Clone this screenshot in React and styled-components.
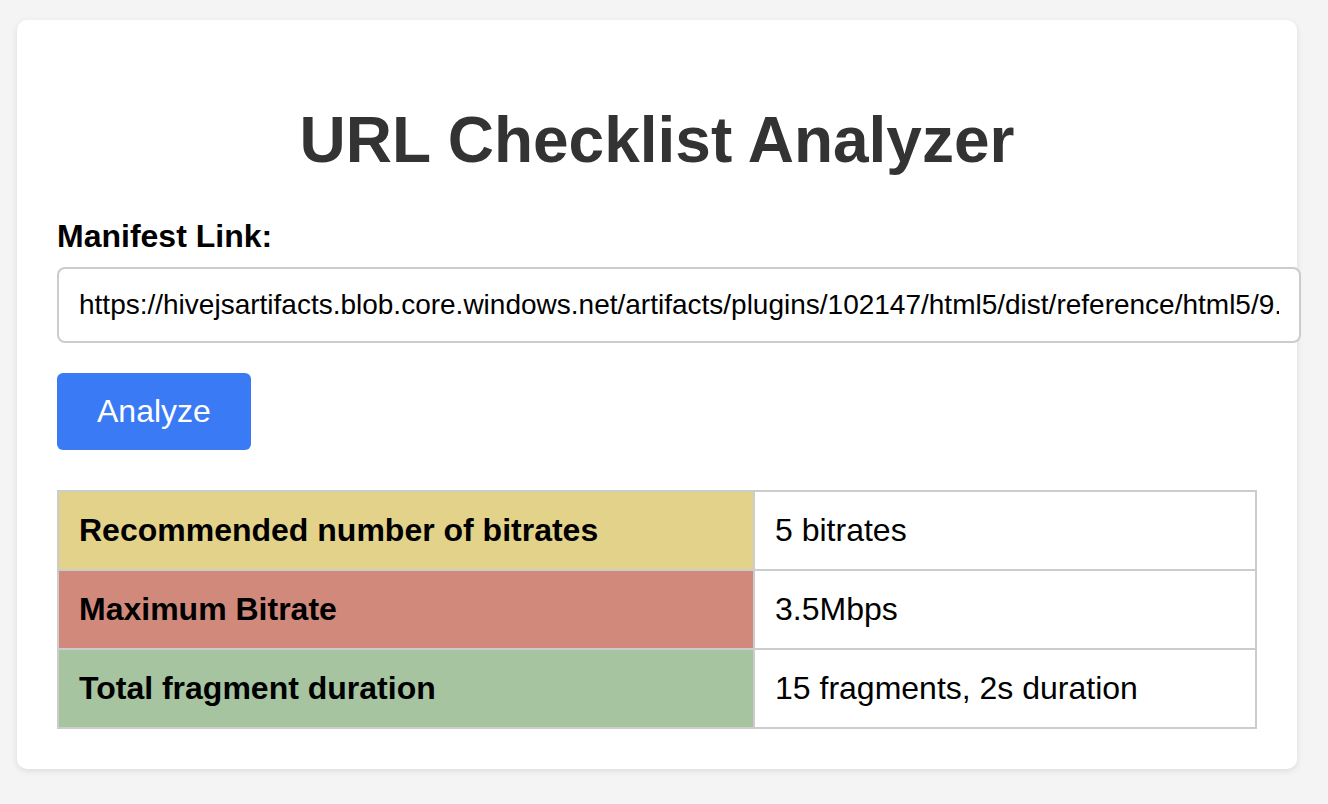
import React, { useState } from "react";
import styled, { createGlobalStyle } from "styled-components";

const GlobalStyle = createGlobalStyle`
  body {
    margin: 0;
    background: #f4f4f4;
    font-family: "Liberation Sans", Arial, Helvetica, sans-serif;
  }
`;

const Card = styled.div`
  width: 1280px;
  margin: 20px 0 35px 17px;
  padding: 40px;
  box-sizing: border-box;
  background: #fff;
  border-radius: 10px;
  box-shadow: 0 2px 6px rgba(0, 0, 0, 0.1);
`;

const Title = styled.h1`
  margin: 43px 0 41px;
  text-align: center;
  font-size: 64px;
  font-weight: bold;
  color: #333;
`;

const Label = styled.label`
  display: block;
  margin-bottom: 12px;
  font-size: 32px;
  font-weight: bold;
  color: #000;
`;

const LinkInput = styled.input`
  display: block;
  width: 100%;
  margin: 0 0 30px;
  padding: 20px 20px;
  border: 2px solid #ccc;
  border-radius: 8px;
  font-family: inherit;
  font-size: 28px;
  line-height: 32px;
  color: #000;
  background: #fff;
  outline: none;
`;

const AnalyzeButton = styled.button`
  display: block;
  padding: 20px 40px;
  border: none;
  border-radius: 6px;
  background: #3a7bf5;
  color: #fff;
  font-family: inherit;
  font-size: 32px;
  line-height: 37px;
  cursor: pointer;
`;

const ResultTable = styled.table`
  width: 1200px;
  margin-top: 40px;
  border-collapse: collapse;
  table-layout: fixed;
  font-size: 32px;
  line-height: 37px;
  color: #000;
`;

const rowColors = {
  warn: "#e3d28a",
  bad: "#d0897b",
  good: "#a6c4a0",
};

const HeadCell = styled.th`
  padding: 20px;
  border: 2px solid #ccc;
  text-align: left;
  font-weight: bold;
  background: ${(p) => rowColors[p.$status]};
`;

const ValueCell = styled.td`
  padding: 20px;
  border: 2px solid #ccc;
  background: #fff;
`;

const results = [
  { name: "Recommended number of bitrates", value: "5 bitrates", status: "warn" },
  { name: "Maximum Bitrate", value: "3.5Mbps", status: "bad" },
  { name: "Total fragment duration", value: "15 fragments, 2s duration", status: "good" },
];

export default function App() {
  const [link, setLink] = useState(
    "https://hivejsartifacts.blob.core.windows.net/artifacts/plugins/102147/html5/dist/reference/html5/9.1.0/manifest.mpd"
  );

  return (
    <>
      <GlobalStyle />
      <Card>
        <Title>URL Checklist Analyzer</Title>
        <Label htmlFor="manifest">Manifest Link:</Label>
        <LinkInput
          id="manifest"
          type="text"
          value={link}
          onChange={(e) => setLink(e.target.value)}
        />
        <AnalyzeButton type="button">Analyze</AnalyzeButton>
        <ResultTable>
          <colgroup>
            <col style={{ width: "696px" }} />
            <col />
          </colgroup>
          <tbody>
            {results.map((r) => (
              <tr key={r.name}>
                <HeadCell $status={r.status}>{r.name}</HeadCell>
                <ValueCell>{r.value}</ValueCell>
              </tr>
            ))}
          </tbody>
        </ResultTable>
      </Card>
    </>
  );
}
